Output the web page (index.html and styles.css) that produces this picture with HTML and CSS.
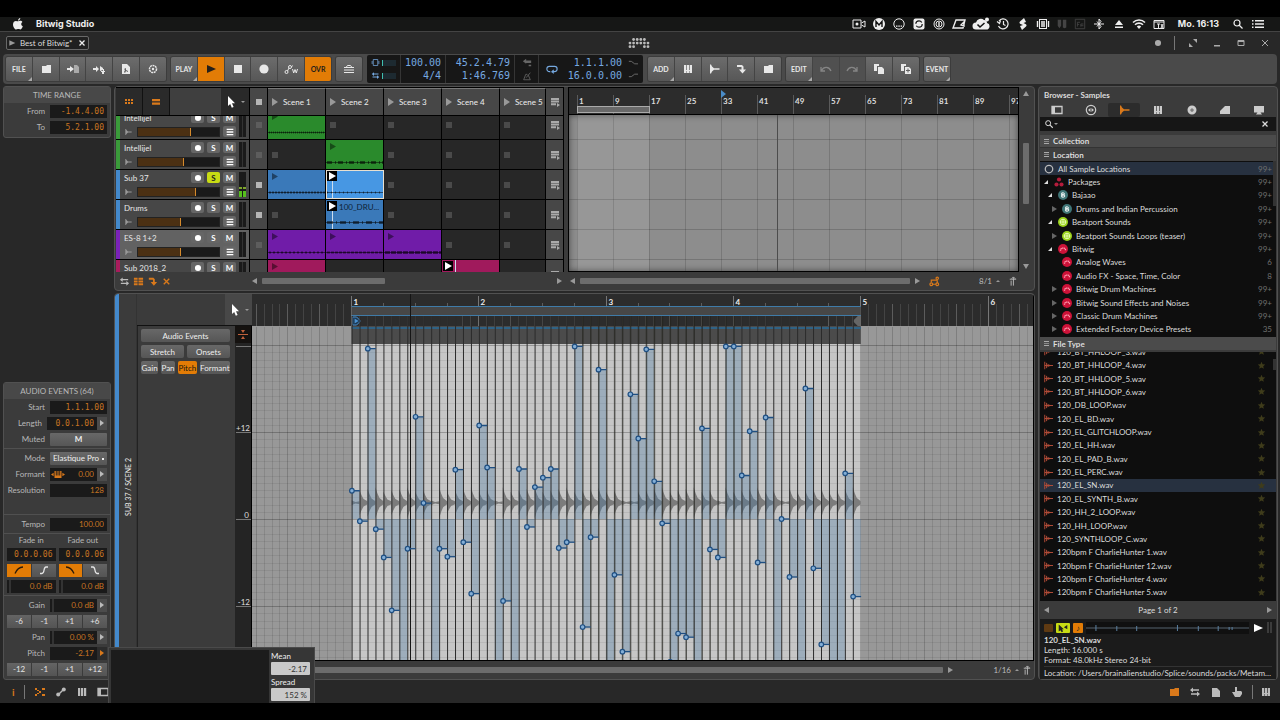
FILE: index.html
```html
<!DOCTYPE html>
<html lang="en">
<head>
<meta charset="utf-8">
<title>Bitwig Studio</title>
<link rel="stylesheet" href="styles.css">
</head>
<body>
<svg class="defs" aria-hidden="true">
  <symbol id="folder" viewBox="0 0 12 12"><path d="M2 3h4l1-1h4v8H2z"/></symbol>
  <symbol id="file-in" viewBox="0 0 12 12"><path d="M0 5h3V3l4 3-4 3V7H0z"/><path d="M7 2h3l2 2v6H7z" opacity=".55"/></symbol>
  <symbol id="file-add" viewBox="0 0 12 12"><path d="M0 5h3V3l3 3-3 3V7H0zM7 3l3 2v2l-3 1zM8 8h2V6h1v2h1v1h-1v2H9V9H8z"/></symbol>
  <symbol id="doc" viewBox="0 0 12 12"><path fill-rule="evenodd" d="M2 1h5l3 3v7H2zM4 6l1 1-1 2 1 1 1-2 2 1V8L6 7V5z"/></symbol>
  <symbol id="gear" viewBox="0 0 12 12"><circle cx="6" cy="6" r="3.500" fill="none" stroke="currentColor" stroke-width="1.500" stroke-dasharray="2 .6"/><circle cx="6" cy="6" r="1.200"/></symbol>
  <symbol id="play" viewBox="0 0 12 12"><path d="M2 2l9 4-9 4z"/></symbol>
  <symbol id="square" viewBox="0 0 12 12"><path d="M2 2h8v8H2z"/></symbol>
  <symbol id="dot" viewBox="0 0 12 12"><circle cx="6" cy="6" r="4.600"/></symbol>
  <symbol id="auto" viewBox="0 0 14 12"><g fill="none" stroke="currentColor"><circle cx="2.500" cy="9" r="1.500"/><circle cx="6" cy="4" r="1.500"/><path d="M3.500 8L5 5M7.500 4l1-1.500M8.500 6l1.200 4 1.300-3.500L12.300 10 13.500 6"/></g></symbol>
  <symbol id="layers" viewBox="0 0 12 12"><path d="M1 9.500h10M1 7h10M1 4.500h10M3 4.500L4.500 2.500h3L9 4.500" fill="none" stroke="currentColor"/></symbol>
  <symbol id="keys" viewBox="0 0 12 12"><path d="M2 2h2v5h.7V2H7v5h.7V2H10v8H7.500V8H7v2H5V8h-.5v2H2z"/></symbol>
  <symbol id="wave" viewBox="0 0 12 12"><path d="M2 1.500h1l1 2 2 1.800h5.500v1.400H6L4 8.500l-1 2H2z"/></symbol>
  <symbol id="hook" viewBox="0 0 12 12"><path d="M2 2h5l1.500 1.500V6.500H11L7.500 10.500 4 6.500h2.500V4H2z"/></symbol>
  <symbol id="undo" viewBox="0 0 12 12"><path d="M1 4v4h4M1.500 7.500C4 3 9 3.500 11 8" fill="none" stroke="currentColor" stroke-width="1.300"/></symbol>
  <symbol id="redo" viewBox="0 0 12 12"><path d="M11 4v4H7M10.500 7.500C8 3 3 3.500 1 8" fill="none" stroke="currentColor" stroke-width="1.300"/></symbol>
  <symbol id="copy" viewBox="0 0 12 12"><path d="M1 1h5v2H4v5H1z"/><path d="M5 4h4l2 2v5H5z"/></symbol>
  <symbol id="dup" viewBox="0 0 12 12"><path d="M1 1h5v2H4v5H1z"/><path fill-rule="evenodd" d="M5 4h4l2 2v5H5zM6 7v1h1.500v1.500h1V8H10V7H8.500V5.500h-1V7z"/></symbol>
  <symbol id="cursor" viewBox="0 0 12 12"><path d="M3 0v10l2.200-2 1.600 3.800 1.800-.8L7 7.300h3z"/></symbol>
  <symbol id="grid6" viewBox="0 0 12 12"><path d="M2 3h2v2H2zM5 3h2v2H5zM8 3h2v2H8zM2 6h2v2H2zM5 6h2v2H5zM8 6h2v2H8z"/></symbol>
  <symbol id="two" viewBox="0 0 12 12"><path d="M2 3h8v2.300H2zM2 6.500h8v2.300H2z"/></symbol>
  <symbol id="lines" viewBox="0 0 12 12"><path d="M1 1h10v2H1zM1 5h10v2H1zM1 9h10v2H1z"/></symbol>
  <symbol id="queue" viewBox="0 0 12 12"><path d="M2 2h8v2H2zM2 4.600h8v2H2zM2 7.200h5v2H2zM8 7l3 2-3 2z"/></symbol>
  <symbol id="cross" viewBox="0 0 12 12"><path d="M3 3l6 6M9 3L3 9" stroke="currentColor" stroke-width="1.500"/></symbol>
  <symbol id="swap" viewBox="0 0 12 12"><path d="M4 1.500v5L1 4zM4 3.300h6v1.400H4zM8 5.500v5L11 8zM2 7.300h6v1.400H2z"/></symbol>
  <symbol id="lanes" viewBox="0 0 12 12"><path d="M1 2h4v2H1zM6 2h5v2H6zM1 5h4v2H1zM6 5h5v2H6zM1 8h4v2H1zM6 8h5v2H6z"/></symbol>
  <symbol id="panel" viewBox="0 0 12 12"><path d="M1 2.500h10v7H1z" fill="none" stroke="currentColor" stroke-width="1.300"/><path d="M1 2h3v8H1z"/></symbol>
  <symbol id="target" viewBox="0 0 12 12"><circle cx="6" cy="6" r="4.700" fill="none" stroke="currentColor" stroke-width="1.200"/><path d="M5.500 4v4L3 6zM6.500 4v4L9 6z"/></symbol>
  <symbol id="disc" viewBox="0 0 12 12"><path fill-rule="evenodd" d="M6 1.500a4.500 4.500 0 1 0 0 9 4.500 4.500 0 1 0 0-9zM6 4.500a1.500 1.500 0 1 1 0 3 1.500 1.500 0 1 1 0-3z"/><circle cx="6" cy="6" r=".8"/></symbol>
  <symbol id="wedge" viewBox="0 0 12 12"><path d="M1 10V7l5-5h5v8z"/></symbol>
  <symbol id="screen" viewBox="0 0 12 12"><path d="M1 2h10v6.500H7.500L9 10.500H3l1.500-2H1z"/></symbol>
  <symbol id="mag" viewBox="0 0 12 12"><circle cx="5" cy="5" r="3" fill="none" stroke="currentColor" stroke-width="1.200"/><path d="M7 7l3.500 3.500" stroke="currentColor" stroke-width="1.300"/></symbol>
  <symbol id="star" viewBox="0 0 12 12"><path d="M6 1l1.400 3.300 3.600.3-2.700 2.300.8 3.500L6 8.500l-3.100 1.900.8-3.500L1 4.600l3.600-.3z"/></symbol>
  <symbol id="sample" viewBox="0 0 12 12"><path d="M1 1v10M3.500 2.500v7M5.500 4v4M7.500 5v2M1 6h11" stroke="currentColor" stroke-width="1.300"/></symbol>
  <symbol id="fade1" viewBox="0 0 12 12"><path d="M2 9.500C4 5 6 3 10 3" fill="none" stroke="currentColor" stroke-width="1.300"/></symbol>
  <symbol id="fade2" viewBox="0 0 12 12"><path d="M2 9.500h2C7 9.500 5 3 8 3h2" fill="none" stroke="currentColor" stroke-width="1.300"/></symbol>
  <symbol id="fade3" viewBox="0 0 12 12"><path d="M2 3c4 0 6 2 8 6.500" fill="none" stroke="currentColor" stroke-width="1.300"/></symbol>
  <symbol id="fade4" viewBox="0 0 12 12"><path d="M2 3h2c3 0 1 6.500 4 6.500h2" fill="none" stroke="currentColor" stroke-width="1.300"/></symbol>
  <symbol id="snap" viewBox="0 0 12 12"><path d="M7 1.500v9M4.500 5v5.500M3 3.500h7M7 1L5 3M7 1l2 2" fill="none" stroke="currentColor"/></symbol>
  <symbol id="page" viewBox="0 0 12 12"><path d="M2 2h5l3 3v6H2z"/></symbol>
  <symbol id="hand" viewBox="0 0 12 12"><path d="M4 1h2v4h4l1 1v2l-2 3H4L1 6h3z"/></symbol>
  <symbol id="nodes" viewBox="0 0 12 12"><path d="M1 2h2v2H1zM1 8h2v2H1zM5 5h2v2H5zM8 2h3v2H8zM8 8h3v2H8zM3 4h2v1H3zM3 7h2v1H3z"/></symbol>
  <symbol id="link" viewBox="0 0 12 12"><path d="M3 9l5-5" stroke="currentColor" stroke-width="1.500"/><circle cx="3.200" cy="8.500" r="2"/><circle cx="8.800" cy="3.500" r="2"/></symbol>
  <symbol id="bars" viewBox="0 0 12 12"><path d="M2 2h2.200v8H2zM5 2h2.200v8H5zM8 2h2.200v8H8z"/></symbol>
  <symbol id="splice" viewBox="0 0 12 12"><path d="M7 0L3 3.500c-1 1-.5 2 .5 2.500L6 7 3 8l2 4 4-3.500c1-1 .5-2-.5-2.500L6.500 5 9 4z"/></symbol>
  <symbol id="person" viewBox="0 0 12 12"><g fill="none" stroke="currentColor" stroke-width="1.300"><circle cx="9" cy="2.500" r="1.300"/><circle cx="2.500" cy="9" r="1.500"/><circle cx="9" cy="9" r="1.500"/><path d="M2.500 7V4.500H9M4 9h3.500M9 4.500v3"/></g></symbol>
</svg>

<header class="menubar">
  <svg class="apple" viewBox="0 0 12 12"><path d="M8.300 0C8.300 1.500 7.300 2.600 6 2.600 6 1.300 7 .2 8.300 0zM6.100 3.300c.6 0 1.200-.6 2.200-.5 1 0 1.700.5 2.100 1.100-1.800 1.100-1.500 3.600.4 4.300C10.200 9.900 9.300 11.500 8.200 11.500c-.8 0-1.100-.4-2-.4s-1.300.4-2 .4C2.700 11.500 1 8.800 1 6.500 1 4 2.500 2.900 3.900 2.900c1 0 1.600.5 2.200.4z"/></svg>
  <strong class="app-name">Bitwig Studio</strong>
  <div class="tray">
    <svg viewBox="0 0 14 12"><path d="M1 2h8v8H1zM9.500 5l3.500-2v6L9.500 7" fill="none" stroke="currentColor"/><circle cx="5" cy="6" r="1.500"/></svg>
    <svg viewBox="0 0 14 12"><circle cx="7" cy="6" r="6"/><path d="M4 9V3.500l3 3.500 3-3.500V9" fill="none" stroke="#111" stroke-width="1.400"/></svg>
    <svg viewBox="0 0 14 12"><circle cx="7" cy="6" r="5.200" fill="none" stroke="currentColor"/><path d="M4 7.500h1.500v1.200H4zM6.300 7.500h1.500v1.200H6.300zM8.600 7.500h1.500v1.200H8.600z"/></svg>
    <svg viewBox="0 0 14 12"><rect x="1.500" y=".5" width="11" height="11" rx="2"/><circle cx="7" cy="6" r="3.200" fill="none" stroke="#111" stroke-width="1.200" stroke-dasharray="8 2"/></svg>
    <svg viewBox="0 0 14 12"><circle cx="7" cy="6" r="5" fill="none" stroke="currentColor"/><circle cx="7" cy="6" r="3" fill="none" stroke="currentColor"/><path d="M6.300 4h1.400v4H6.300z"/></svg>
    <svg viewBox="0 0 14 12"><path d="M4 2h9l-2 8H1zM9 7l3-3v4z" fill="none" stroke="currentColor" stroke-width="1.400"/></svg>
    <svg class="cloud" viewBox="0 0 18 14"><path d="M4 12.500a3.500 3.500 0 0 1 0-7A5 5 0 0 1 12 3a3 3 0 0 1 3 3 3.300 3.300 0 0 1-1 6.500z"/><circle cx="15" cy="2.500" r="2"/><path d="M5.500 7.500l2.500 2.500 4.500-4" fill="none" stroke="#111" stroke-width="1.500"/></svg>
    <svg viewBox="0 0 14 12"><path d="M3 3a5 5 0 1 1-.5 5M1 3.500l2.500 2 1-3M7.500 3v3.500l2 1" fill="none" stroke="currentColor" stroke-width="1.200"/></svg>
    <svg viewBox="0 0 12 12"><use href="#splice"/></svg>
    <svg viewBox="0 0 14 12"><rect x="3.500" y="1.500" width="7" height="9" fill="none" stroke="currentColor"/><path d="M5 4h4M5 6h4M5 8h4M1.500 3v6M12.500 3v6" stroke="currentColor" stroke-width="1.400"/></svg>
    <svg class="dim" viewBox="0 0 14 12"><path d="M2 1h4v7l-2 3-2-3zM8 1h4v9l-2 1-2-1z"/></svg>
    <svg class="dim" viewBox="0 0 14 12"><path d="M1.500.5h11v11h-11zM4 9V4h3M4 6.500h2M8 9V6h3M8 8h3" fill="none" stroke="currentColor"/></svg>
    <svg viewBox="0 0 14 12"><path d="M7 1v10M7 1l2 2.500-4 5M7 11l2-2.500-4-5M2 6h10" fill="none" stroke="currentColor"/></svg>
    <svg viewBox="0 0 14 12"><path d="M7 2l4 5H3zM3 8.500h8V10H3z"/></svg>
    <svg viewBox="0 0 14 12"><path d="M1 4.500a8.500 8.500 0 0 1 12 0M3 6.800a5.600 5.600 0 0 1 8 0" fill="none" stroke="currentColor" stroke-width="1.600"/><path d="M4.800 8.500a3.200 3.200 0 0 1 4.400 0L7 11z"/></svg>
    <svg viewBox="0 0 14 12"><path fill="none" stroke="currentColor" d="M2 2.500h10v8H2zM2 4h10M5 6h3M6.500 6v4M9 6l2 4M11 6L9 10"/></svg>
    <strong class="clock">Mo. 16:13</strong>
    <svg viewBox="0 0 12 12"><use href="#mag"/></svg>
    <svg viewBox="0 0 14 12"><path d="M1 2h1.500v1.500H1zM4 2h9v1.500H4zM1 5.300h1.500v1.500H1zM4 5.300h9v1.500H4zM1 8.600h1.500v1.500H1zM4 8.600h9v1.500H4z"/></svg>
  </div>
</header>

<div class="app">
  <div class="titlebar">
    <div class="tab"><svg viewBox="0 0 12 12"><use href="#play"/></svg><span>Best of Bitwig*</span><button class="bare" aria-label="Close project"><svg viewBox="0 0 12 12"><use href="#cross"/></svg></button></div>
    <svg class="logo" viewBox="0 0 22 12" aria-label="Bitwig"><g id="logo-dots"></g></svg>
    <div class="window-tools">
      <svg viewBox="0 0 12 12"><use href="#dot"/></svg><i class="rule"></i>
      <button class="bare" aria-label="Full screen"><svg viewBox="0 0 12 12"><path d="M6 2h4v4zM2 6v4h4z"/></svg></button>
      <button class="bare" aria-label="Minimize"><svg viewBox="0 0 12 12"><path d="M3 8h6v1.500H3z"/></svg></button>
      <button class="bare" aria-label="Maximize"><svg viewBox="0 0 12 12"><path d="M3 3.500h6v5H3zM3 4.500h6" fill="none" stroke="currentColor"/></svg></button>
      <button class="bare" aria-label="Close"><svg viewBox="0 0 12 12"><path d="M3 3l6 6M9 3L3 9" stroke="currentColor"/></svg></button>
    </div>
  </div>

  <div class="toolbar">
    <div class="group six">
      <button class="tool menu">FILE</button>
      <button class="tool" aria-label="Open"><svg viewBox="0 0 12 12"><use href="#folder"/></svg></button>
      <button class="tool" aria-label="Import"><svg viewBox="0 0 12 12"><use href="#file-in"/></svg></button>
      <button class="tool" aria-label="Import as new"><svg viewBox="0 0 12 12"><use href="#file-add"/></svg></button>
      <button class="tool" aria-label="Export"><svg viewBox="0 0 12 12"><use href="#doc"/></svg></button>
      <button class="tool" aria-label="Settings"><svg viewBox="0 0 12 12"><use href="#gear"/></svg></button>
    </div>
    <div class="group six">
      <button class="tool menu">PLAY</button>
      <button class="tool on" aria-label="Play"><svg viewBox="0 0 12 12"><use href="#play"/></svg></button>
      <button class="tool" aria-label="Stop"><svg viewBox="0 0 12 12"><use href="#square"/></svg></button>
      <button class="tool" aria-label="Record"><svg viewBox="0 0 12 12"><use href="#dot"/></svg></button>
      <button class="tool" aria-label="Automation write"><svg class="auto" viewBox="0 0 14 12"><use href="#auto"/></svg></button>
      <button class="tool on">OVR</button>
    </div>
    <div class="group one"><button class="tool" aria-label="Layers"><svg viewBox="0 0 12 12"><use href="#layers"/></svg></button></div>
    <div class="lcd">
      <div class="lcd-load">
        <div><svg viewBox="0 0 12 12"><path d="M3 2h6v8H3zM1.500 4v4M10.500 4v4" fill="none" stroke="currentColor"/></svg><i></i></div>
        <div><svg viewBox="0 0 12 12"><use href="#swap"/></svg><i></i></div>
      </div>
      <div class="lcd-cell tempo"><span>100.00</span><span>4/4</span></div>
      <div class="lcd-cell pos"><span>45.2.4.79</span><span>1:46.769</span></div>
      <div class="lcd-cell icons"><svg viewBox="0 0 12 12"><path d="M1 4l4-3v2h6v3H5v1zM8 8h3v2H8z"/></svg><svg viewBox="0 0 12 12"><path d="M2 10.500h8L7.500 5M2 10.500L4.500 4h2M5 8l5-6" fill="none" stroke="currentColor"/></svg></div>
      <div class="lcd-cell loop"><svg viewBox="0 0 14 12"><path d="M5 9H4a3 3 0 0 1 0-6h6a3 3 0 0 1 0 6H7l2-2M7 9l2 2" fill="none" stroke="currentColor" stroke-width="1.300"/></svg>
        <div class="loop-values"><span>1.1.1.00</span><span>16.0.0.00</span></div>
        <div class="loop-punch"><svg viewBox="0 0 12 12"><path d="M1 4h3l4 3h4" fill="none" stroke="currentColor"/></svg><svg viewBox="0 0 12 12"><path d="M1 8h3l4-3h4" fill="none" stroke="currentColor"/></svg></div>
      </div>
    </div>
    <div class="group five">
      <button class="tool menu">ADD</button>
      <button class="tool" aria-label="Add instrument"><svg viewBox="0 0 12 12"><use href="#keys"/></svg></button>
      <button class="tool" aria-label="Add audio"><svg viewBox="0 0 12 12"><use href="#wave"/></svg></button>
      <button class="tool" aria-label="Add effect"><svg viewBox="0 0 12 12"><use href="#hook"/></svg></button>
      <button class="tool" aria-label="Add group"><svg viewBox="0 0 12 12"><use href="#folder"/></svg></button>
    </div>
    <div class="group five">
      <button class="tool menu">EDIT</button>
      <button class="tool off" aria-label="Undo"><svg viewBox="0 0 12 12"><use href="#undo"/></svg></button>
      <button class="tool off" aria-label="Redo"><svg viewBox="0 0 12 12"><use href="#redo"/></svg></button>
      <button class="tool" aria-label="Copy"><svg viewBox="0 0 12 12"><use href="#copy"/></svg></button>
      <button class="tool" aria-label="Duplicate"><svg viewBox="0 0 12 12"><use href="#dup"/></svg></button>
    </div>
    <div class="group one"><button class="tool menu">EVENT</button></div>
  </div>

  <main class="workspace">
    <aside class="inspector">
      <section class="box">
        <h2>TIME RANGE</h2>
        <div class="row"><label for="from">From</label><input id="from" class="val mono" value="-1.4.4.00"></div>
        <div class="row"><label for="to">To</label><input id="to" class="val mono" value="5.2.1.00"></div>
      </section>
      <section class="box">
        <h2>AUDIO EVENTS (64)</h2>
        <div class="row"><label for="start">Start</label><input id="start" class="val mono" value="1.1.1.00"></div>
        <div class="row"><label for="length">Length</label><input id="length" class="val mono" value="0.0.1.00"><button class="more" aria-label="Length options"></button></div>
        <div class="row"><label for="muted">Muted</label><button id="muted" class="wide">M</button></div>
        <hr>
        <div class="row"><label for="mode">Mode</label><select id="mode" class="wide"><option>Elastique Pro</option></select></div>
        <div class="row"><label for="formant">Formant</label><div class="with-icon"><svg viewBox="0 0 16 12"><path d="M0 6l3-2v4zM16 6l-3-2v4zM4 2h1.500v5h1V2h1v5h1V2h1v5h1V2H12v8H4z"/></svg><input id="formant" class="val" value="0.00"></div><button class="more" aria-label="Formant options"></button></div>
        <div class="row"><label for="res">Resolution</label><input id="res" class="val" value="128"></div>
        <hr class="spaced">
        <div class="row"><label for="tempo">Tempo</label><input id="tempo" class="val" value="100.00"></div>
        <hr>
        <div class="pair labels"><label for="fin">Fade in</label><label for="fout">Fade out</label></div>
        <div class="pair"><input id="fin" class="val mono" value="0.0.0.06"><input id="fout" class="val mono" value="0.0.0.06"></div>
        <div class="pair"><div class="seg"><button class="on" aria-label="Fade in convex"><svg viewBox="0 0 12 12"><use href="#fade1"/></svg></button><button aria-label="Fade in S"><svg viewBox="0 0 12 12"><use href="#fade2"/></svg></button></div><div class="seg"><button class="on" aria-label="Fade out convex"><svg viewBox="0 0 12 12"><use href="#fade3"/></svg></button><button aria-label="Fade out S"><svg viewBox="0 0 12 12"><use href="#fade4"/></svg></button></div></div>
        <div class="pair"><input class="val knob" aria-label="Fade in level" value="0.0 dB"><input class="val knob" aria-label="Fade out level" value="0.0 dB"></div>
        <hr>
        <div class="row"><label for="gain">Gain</label><input id="gain" class="val knob" value="0.0 dB"><button class="more" aria-label="Gain options"></button></div>
        <div class="seg four"><button>-6</button><button>-1</button><button>+1</button><button>+6</button></div>
        <div class="row"><label for="pan">Pan</label><input id="pan" class="val knob" value="0.00 %"><button class="more" aria-label="Pan options"></button></div>
        <div class="row"><label for="pitch">Pitch</label><input id="pitch" class="val" value="-2.17"><button class="more open" aria-label="Pitch options"></button></div>
        <div class="seg four"><button>-12</button><button>-1</button><button>+1</button><button>+12</button></div>
      </section>
    </aside>

    <div class="center">
      <section class="frame top">
        <div class="launcher">
          <div class="l-row l-head">
            <div class="head-tools"><button class="view" aria-label="Launcher"><svg viewBox="0 0 12 12"><use href="#grid6"/></svg></button><button class="view" aria-label="Arranger"><svg viewBox="0 0 12 12"><use href="#two"/></svg></button><span class="grow"></span><button class="pointer" aria-label="Pointer tool"><svg viewBox="0 0 12 12"><use href="#cursor"/></svg><i class="tiny"></i></button></div>
            <div class="stop"><i class="sq hot"></i></div>
            <button class="scene"><i class="tri"></i>Scene 1</button><button class="scene"><i class="tri"></i>Scene 2</button><button class="scene"><i class="tri"></i>Scene 3</button><button class="scene"><i class="tri"></i>Scene 4</button><button class="scene"><i class="tri"></i>Scene 5</button>
            <div class="stop"><svg viewBox="0 0 12 12"><use href="#queue"/></svg></div>
          </div>
          <div class="tracks"><div id="tracks"></div></div>
        </div>
        <div class="arranger">
          <div class="a-ruler"><div class="a-loop"></div><i class="flag"></i><div class="a-nums"><span>1</span><span>9</span><span>17</span><span>25</span><span>33</span><span>41</span><span>49</span><span>57</span><span>65</span><span>73</span><span>81</span><span>89</span><span>97</span></div></div>
          <div class="a-grid"><i class="a-range"></i><i class="a-head"></i></div>
        </div>
        <div class="v-scroll"><i class="arrow up"></i><i class="thumb"></i><i class="arrow down"></i></div>
        <div class="foot left"><svg viewBox="0 0 12 12"><use href="#swap"/></svg><svg class="hot-icon" viewBox="0 0 12 12"><use href="#lanes"/></svg><svg class="hot-icon" viewBox="0 0 12 12"><use href="#hook"/></svg><svg class="hot-icon" viewBox="0 0 12 12"><use href="#cross"/></svg><span class="grow"></span><div class="h-scroll launcher-scroll"><i class="arrow prev"></i><div class="rail"><i class="thumb"></i></div><i class="arrow next"></i></div></div>
        <div class="foot right"><div class="h-scroll"><i class="arrow prev"></i><div class="rail"><i class="thumb full"></i></div><i class="arrow next"></i></div><svg class="orange" viewBox="0 0 12 12"><use href="#person"/></svg><button class="bare zoom">8/1<i class="tiny up"></i></button><svg viewBox="0 0 12 12"><use href="#snap"/></svg></div>
      </section>

      <section class="frame editor">
        <i class="strip"></i>
        <div class="side-label"><span>SUB 37 / SCENE 2</span></div>
        <div class="ed-body">
          <div class="ed-head"><button class="pointer" aria-label="Editor pointer tool"><svg viewBox="0 0 12 12"><use href="#cursor"/></svg><i class="tiny"></i></button></div>
          <div class="lane-buttons">
            <button class="wide full">Audio Events</button>
            <div class="lane-row"><button class="wide">Stretch</button><button class="wide">Onsets</button></div>
            <div class="lane-row fit"><button class="wide">Gain</button><button class="wide">Pan</button><button class="wide on">Pitch</button><button class="wide">Formant</button></div>
          </div>
          <svg class="scale" aria-label="Pitch scale"><path d="M0 0h17v17H0z" fill="#151210"/><path d="M3 8.500h10" stroke="#c0613c"/><path d="M8 7L6 4h4zM8 10l-2 3h4z" fill="#c0613c"/><path d="M1 20.500h15M1 106.500h15M1 193.500h15M1 280.500h15" stroke="#777"/><text x="15" y="105">+12</text><text x="14" y="192">0</text><text x="15" y="279">-12</text></svg>
          <svg class="chart" id="chart" aria-label="Pitch of audio events"></svg>
        </div>
        <div class="foot ed-foot"><div class="h-scroll"><div class="rail"><i class="thumb full"></i></div><i class="arrow next"></i></div><button class="bare zoom">1/16<i class="tiny up"></i></button><svg viewBox="0 0 12 12"><use href="#snap"/></svg></div>
      </section>
    </div>

    <aside class="browser">
      <h1>Browser - Samples</h1>
      <nav class="b-tabs">
        <button aria-label="Everything"><svg viewBox="0 0 12 12"><use href="#panel"/></svg></button><button aria-label="Devices"><svg viewBox="0 0 12 12"><use href="#target"/></svg></button><button class="on" aria-label="Samples"><svg viewBox="0 0 12 12"><use href="#wave"/></svg></button><button aria-label="Presets"><svg viewBox="0 0 12 12"><use href="#keys"/></svg></button><button aria-label="Multisamples"><svg viewBox="0 0 12 12"><use href="#disc"/></svg></button><button aria-label="Clips"><svg viewBox="0 0 12 12"><use href="#wedge"/></svg></button><button aria-label="Files"><svg viewBox="0 0 12 12"><use href="#screen"/></svg></button>
      </nav>
      <div class="search"><svg viewBox="0 0 12 12"><use href="#mag"/></svg><i class="tiny"></i><input type="text" aria-label="Search samples"><button class="bare" aria-label="Clear search"><svg viewBox="0 0 12 12"><use href="#cross"/></svg></button></div>
      <h2 class="b-head first"><i class="eq"></i>Collection</h2>
      <h2 class="b-head flat"><i class="eq"></i>Location</h2>
      <div class="b-list locations"><ul id="locations"></ul><i class="b-thumb"></i></div>
      <h2 class="b-head"><i class="eq"></i>File Type</h2>
      <div class="b-list files"><ul id="files"></ul><i class="b-thumb"></i></div>
      <div class="pager"><button class="bare" aria-label="Previous page"><i class="arrow prev"></i></button><span>Page 1 of 2</span><button class="bare" aria-label="Next page"><i class="arrow next"></i></button></div>
      <div class="preview">
        <div class="p-bar"><i class="p-chip brown"></i><i class="p-chip yellow"><svg viewBox="0 0 14 12"><path d="M2 2v8l2-1.500L5.500 11 7 10 6 7.500h2zM8 5l4-2.500v5z"/></svg></i><i class="p-chip note">♪</i><svg class="p-wave" viewBox="0 0 164 12" preserveAspectRatio="none"><path d="M0 6h164" stroke="#55636f"/><path d="M10 3v6M31 4v5M51 4v5M92 3v6M113 4v5M133 4v5M144 5v3M147 5v3" stroke="#5a7fa0"/></svg><button class="bare" aria-label="Play preview"><svg viewBox="0 0 12 12"><use href="#play"/></svg></button><i class="p-vu"></i></div>
        <p><b>120_EL_SN.wav</b></p><p>Length: 16.000 s</p><p>Format: 48.0kHz Stereo 24-bit</p>
        <p class="path">Location: /Users/brainalienstudio/Splice/sounds/packs/Metamorphi...</p>
      </div>
    </aside>
  </main>

  <footer class="status">
    <b class="info">i</b><i class="rule"></i>
    <svg class="orange" viewBox="0 0 12 12"><use href="#nodes"/></svg><svg viewBox="0 0 12 12"><use href="#link"/></svg><svg viewBox="0 0 12 12"><use href="#bars"/></svg><svg viewBox="0 0 12 12"><use href="#panel"/></svg>
    <span class="grow"></span>
    <svg class="orange" viewBox="0 0 12 12"><use href="#folder"/></svg><svg viewBox="0 0 12 12"><use href="#swap"/></svg><svg viewBox="0 0 12 12"><use href="#page"/></svg><svg viewBox="0 0 12 12"><use href="#hand"/></svg><span class="last"><i class="rule"></i><svg viewBox="0 0 12 12"><use href="#keys"/></svg></span>
  </footer>

  <div class="popup">
    <div class="graph"></div>
    <div class="fields"><label for="mean">Mean</label><input id="mean" value="-2.17"><label for="spread">Spread</label><input id="spread" value="152 %"></div>
  </div>
</div>
<script src="app.js"></script>
</body>
</html>
```
FILE: styles.css
```css
* { box-sizing: border-box; }
html, body { height: 100%; margin: 0; }
body {
  display: flex; flex-direction: column; padding: 17px 0;
  background: #000; color: #dcdcdc; overflow: hidden;
  font-family: Lato, "Open Sans", sans-serif; font-size: 8px; line-height: 12px;
}
svg { width: 12px; height: 12px; fill: currentColor; flex: none; }
button, input, select { font: inherit; color: inherit; margin: 0; padding: 0; border: 0; border-radius: 0; min-width: 0; }
button { display: flex; align-items: center; justify-content: center; background: none; }
i { font-style: normal; }
h1, h2, p, ul { margin: 0; padding: 0; font-size: inherit; font-weight: normal; list-style: none; }
.defs { position: absolute; width: 0; height: 0; }
.grow { flex: 1; }
.orange, .hot-icon { color: #d9791b; }
.rule { width: 1px; height: 14px; background: #777; }

.menubar { display: flex; align-items: center; height: 14px; flex: none; padding: 0 15px 0 12px; background: #161716; color: #eee; font-family: Inter, Roboto, sans-serif; }
.app-name { margin-left: 12px; font-size: 9px; }
.tray { display: flex; align-items: center; gap: 6px; margin-left: auto; }
.tray svg { width: 14px; }
.tray .cloud { width: 18px; height: 14px; }
.tray .dim { width: 12px; color: #444; }
.clock { margin: 0 6px; font-size: 9px; }

.app { position: relative; display: flex; flex-direction: column; flex: 1; min-height: 0; background: #282828; border-top: 1px solid #444; }
.titlebar { display: grid; grid-template-columns: 1fr auto 1fr; align-items: center; flex: none; height: 22px; padding: 0 9px 0 6px; }
.tab { display: flex; align-items: center; justify-self: start; gap: 4px; height: 14px; padding: 0 1px; border: 1px solid #686868; border-radius: 2px; background: #202020; }
.tab svg { width: 8px; height: 8px; color: #999; }
.tab button svg { width: 10px; height: 10px; color: #eee; }
.logo { width: 22px; height: 12px; color: #bbb; }
.window-tools { display: flex; align-items: center; justify-self: end; gap: 12px; color: #aaa; }
.window-tools > svg { width: 8px; height: 8px; }

.toolbar { display: flex; align-items: center; gap: 5px; flex: none; height: 30px; margin: 0 3px; padding: 0 3px; background: #4a4a4a; border-radius: 4px; }
.group { display: flex; border-radius: 2px; overflow: hidden; box-shadow: 0 0 0 1px #3c3c3c; }
.six { width: 160px; }
.five { width: 133px; }
.one { width: 26px; }
.tool { position: relative; flex: 1; height: 24px; background: linear-gradient(#6c6c6c, #575757); color: #e8e8e8; border-right: 1px solid #444; font-size: 7px; font-weight: bold; }
.tool:last-child { border-right: 0; }
.tool .auto { width: 14px; }
.tool.menu::after { content: ""; position: absolute; right: 0; bottom: 0; border: 2px solid #aaa; border-left-color: transparent; border-top-color: transparent; }
.tool.on { background: #e27c06; color: #26201a; }
.tool.off { background: #505050; color: #858585; }
.lcd { display: flex; height: 28px; background: #171717; border-radius: 2px; color: #76a9e0; font-family: "DejaVu Sans Mono", monospace; font-size: 10px; line-height: 13px; }
.lcd > div { border-right: 1px solid #353535; }
.lcd > div:last-child { border-right: 0; }
.lcd span { display: block; text-align: right; }
.lcd-load { width: 34px; padding: 1px 4px; }
.lcd-load div { display: flex; align-items: center; height: 13px; gap: 2px; }
.lcd-load svg { width: 9px; height: 9px; }
.lcd-load i { width: 14px; height: 6px; background: #1d2a31; border-left: 1px solid #3fc0b0; }
.lcd-cell { padding: 1px 4px; }
.tempo { width: 45px; }
.pos { width: 69px; }
.icons { display: flex; flex-direction: column; justify-content: space-around; align-items: center; width: 24px; color: #666; }
.icons svg { width: 10px; height: 10px; }
.loop { display: flex; align-items: center; justify-content: space-between; width: 104px; padding: 1px 5px 1px 7px; }
.loop-values { margin-left: auto; margin-right: 6px; }
.loop-punch { color: #777; height: 24px; }
.loop-punch svg { display: block; width: 10px; }

.workspace { display: flex; flex: 1; min-height: 0; padding: 2px 3px 0; gap: 3px; }
.inspector { display: flex; flex-direction: column; justify-content: space-between; width: 108px; flex: none; }
.box { padding: 0 3px 2px; background: #3b3b3b; border: 1px solid #515151; border-radius: 3px; color: #b8b8b8; }
.box h2 { margin: 0 -3px; height: 16px; line-height: 16px; text-align: center; background: #484848; }
.box hr { height: 1px; margin: 1px -3px; border: 0; background: #505050; }
.box hr.spaced { margin-top: 16px; }
.row { display: flex; align-items: center; height: 16px; }
.row label { flex: 1; padding-right: 5px; text-align: right; }
.val { width: 57px; height: 13px; padding: 0 3px; background: #1a1a1a; color: #c87522; text-align: right; }
.row:has(.more) .val { width: 47px; }
.mono { font-family: "DejaVu Sans Mono", monospace; }
.row:has(.more) .mono { width: 50px; }
.knob { box-shadow: inset 2px 0 #1a1a1a, inset 4px 0 #333; }
.more { width: 10px; height: 13px; background: #4c4c4c; }
.more::before { content: ""; border: 3px solid transparent; border-left: 4px solid #bbb; border-right: 0; }
.more.open { background: #2c2c2c; }
.more.open::before { border-left-color: #d9791b; }
.with-icon { position: relative; display: flex; }
.with-icon svg { position: absolute; left: 1px; top: 1px; width: 14px; height: 11px; color: #d9791b; }
.wide { width: 57px; height: 13px; background: linear-gradient(#686868, #565656); color: #eee; border-radius: 1px; }
#muted { font-weight: bold; }
select.wide { appearance: none; padding-left: 3px; background: linear-gradient(#eee, #eee) 52px 6px / 2px 2px no-repeat, linear-gradient(#686868, #565656); }
.pair { display: grid; grid-template-columns: 1fr 1fr; gap: 3px; height: 16px; align-items: center; }
.pair.labels { height: 11px; text-align: center; line-height: 11px; }
.pair .val { width: 100%; }
.seg { display: grid; grid-template-columns: 1fr 1fr; gap: 1px; }
.seg button { height: 13px; background: linear-gradient(#646464, #545454); color: #e4e4e4; }
.seg button.on { background: #e27c06; color: #2a1b0a; }
.seg.four { grid-template-columns: repeat(4, 1fr); height: 16px; align-items: center; }

.center { display: flex; flex-direction: column; flex: 1; min-width: 0; gap: 2px; }
.frame { background: #3b3b3b; border: 1px solid #515151; border-radius: 4px; min-width: 0; }
.top { display: grid; grid-template-columns: 448px 1fr 14px; grid-template-rows: 185px 18px; column-gap: 4px; padding: 0 1px; flex: none; }
.launcher { background: #000; overflow: hidden; border-top: 1px solid #000; }
.l-row { display: grid; grid-template-columns: 134px 18px repeat(4, 58px) 46px 18px; height: 30px; border-bottom: 1px solid #000; }
.l-row > * { border-right: 1px solid #000; overflow: hidden; }
.l-head { height: 28px; }
.head-tools { display: flex; background: #3f3f3f; }
.view { width: 27px; background: #2a2a2a; border-right: 1px solid #111; color: #d9791b; }
.pointer { width: 28px; gap: 4px; background: #292929; color: #fff; }
.tiny { border: 2px solid transparent; border-top-color: #999; border-bottom: 0; }
.tiny.up { border-top: 0; border-bottom: 2px solid #999; margin-left: 4px; }
.stop { display: flex; align-items: center; justify-content: center; background: #474747; color: #aaa; }
.sq { width: 6px; height: 6px; background: #5d5d5d; }
.sq.hot { background: #b5b5b5; }
.scene { justify-content: flex-start; gap: 5px; padding-left: 4px; background: #474747; color: #eee; border-top: 1px solid #777; white-space: nowrap; }
.tri { border: 4px solid transparent; border-left: 6px solid #999; border-right: 0; flex: none; }
.tracks { height: 156px; overflow: hidden; }
#tracks { margin-top: -6px; }
.track { display: grid; grid-template-columns: 1fr 13px 13px 13px 8px; grid-template-rows: 15px 13px; column-gap: 3px; align-items: center; padding-right: 2px; background: #474747; border-left: 4px solid; }
.track.sel { background: #626262; }
.track .name { padding-left: 4px; color: #e6e6e6; white-space: nowrap; }
.chip { height: 11px; background: #666; border-radius: 2px; color: #fff; font-weight: bold; }
.chip svg { width: 8px; height: 8px; }
.chip.solo { background: #c8dc14; color: #222; }
.meter { grid-column: 5; grid-row: 1 / 3; width: 7px; height: 25px; background: linear-gradient(90deg, transparent 3px, #333 3px 4px, transparent 4px), #1a1a1a; }
.meter.live { background: linear-gradient(90deg, transparent 3px, #1a1a1a 3px 4px, transparent 4px), linear-gradient(#1a1a1a 15px, #7da52a 15px 17px, #1a1a1a 17px 19px, #57c01e 19px); }
.fader-row { grid-column: 1 / 4; display: flex; align-items: center; gap: 5px; padding-left: 4px; color: #999; }
.fader-row svg { width: 8px; height: 8px; }
.fader { flex: 1; height: 10px; background: #1a1a1a; border: 1px solid #222; }
.fader i { display: block; height: 8px; background: #4b3013; border-right: 1px solid #d58a2c; }
.slot { position: relative; display: flex; align-items: center; padding-left: 4px; background: #272727; }
.slot .sq { background: #4a4a4a; }
.clip { position: relative; width: 100%; background: var(--c); }
.clip svg { display: block; width: 100%; height: 29px; color: #000; }
.clip.chosen { outline: 1px solid #e9e0d0; outline-offset: -1px; }
.clip span { position: absolute; left: 13px; top: 1px; color: #0e2236; }

.arranger { background: #000; overflow: hidden; border: 1px solid #000; min-width: 0; margin-right: -4px; }
.a-ruler { position: relative; height: 27px; overflow: hidden; background: linear-gradient(90deg, #5a5a5a 1px, transparent 1px) 8px 7px / 36px 20px repeat-x, #2c2c2c; border-bottom: 1px solid #000; }
.a-nums { display: flex; padding: 7px 0 0 10px; line-height: 12px; font-weight: bold; }
.a-nums span { width: 36px; flex: none; }
.a-loop { position: absolute; left: 8px; top: 18px; width: 73px; height: 7px; background: #696969; border: 1px solid #aaa; }
.flag { position: absolute; left: 152px; top: 2px; border: 4px solid transparent; border-left: 5px solid #4a8cc8; border-right: 0; }
.a-grid { position: relative; height: 156px; background: linear-gradient(rgba(0,0,0,.17) 1px, transparent 1px) 0 24px / 100% 30px, linear-gradient(90deg, rgba(0,0,0,.15) 1px, transparent 1px) 8px 0 / 36px 100%, #8d8d8d; box-shadow: inset 0 0 6px #444; }
.a-range { position: absolute; left: 8px; top: 0; bottom: 0; width: 72px; background: rgba(255,255,255,.09); }
.a-head { position: absolute; left: 208px; top: 0; bottom: 0; width: 1px; background: #4c4c4c; }
.arrow { border: 3px solid transparent; flex: none; }
.arrow.prev { border-right: 5px solid #999; border-left: 0; }
.arrow.next { border-left: 5px solid #999; border-right: 0; }
.arrow.up { border-bottom: 5px solid #999; border-top: 0; }
.arrow.down { border-top: 5px solid #999; border-bottom: 0; }
.v-scroll { display: flex; flex-direction: column; align-items: center; justify-content: space-between; padding: 4px 0 3px; }
.v-scroll .thumb { width: 6px; height: 61px; margin-bottom: 14px; background: #6c6c6c; border-radius: 1px; }
.foot { display: flex; align-items: center; gap: 1px; color: #bbb; }
.foot svg { width: 11px; height: 11px; margin: 0 1px; }
.foot.left { padding-left: 2px; }
.foot.right { grid-column: 2 / 4; gap: 6px; padding-right: 14px; }
.h-scroll { display: flex; align-items: center; flex: 1; gap: 5px; padding: 0 2px; }
.launcher-scroll { flex: none; width: 314px; }
.rail { flex: 1; }
.h-scroll .thumb { display: block; width: 123px; height: 6px; background: #6c6c6c; border-radius: 1px; }
.h-scroll .thumb.full { width: 100%; }
.zoom { margin-left: auto; }
.foot.right .zoom { margin-left: 32px; }

.editor { display: grid; grid-template-columns: 4px 18px 1fr; grid-template-rows: 1fr 18px; flex: 1; min-height: 0; overflow: hidden; }
.strip { grid-row: 1 / 3; background: #4389cc; border-radius: 3px 0 0 0; }
.side-label { display: flex; align-items: center; justify-content: center; grid-row: 1 / 3; border-right: 1px solid #333; }
.side-label span { writing-mode: vertical-rl; transform: rotate(180deg); color: #eee; font-size: 7px; }
.ed-body { display: grid; grid-template-columns: 98px 17px 1fr; grid-template-rows: 32px 1fr; min-width: 0; min-height: 0; }
.ed-head { grid-column: 1 / 3; display: flex; justify-content: flex-end; border-bottom: 1px solid #111; }
.ed-head .pointer { background: #484848; width: 27px; }
.lane-buttons { display: flex; flex-direction: column; gap: 3px; padding: 3px 5px 3px 3px; border-left: 1px solid #222; }
.lane-buttons .wide { flex: 1 1 0; width: auto; border-radius: 2px; }
.lane-buttons .full { flex: none; }
.lane-row { display: flex; gap: 3px; }
.lane-buttons .fit .wide { flex: 1 1 auto; }
.lane-buttons .on { background: #e27c06; color: #20160c; }
.scale { width: 100%; height: 100%; background: #242424; border-right: 1px solid #000; }
.scale text { fill: #ddd; font-size: 8px; text-anchor: end; }
.chart { display: block; grid-column: 3; grid-row: 1 / 3; width: 100%; height: 100%; background: #989898; border: solid #000; border-width: 0 1px 1px 0; overflow: hidden; }
.chart text { fill: #eee; font-size: 8px; font-weight: bold; }
.ed-foot { grid-column: 3; padding-right: 1px; }
.ed-foot .h-scroll { flex: none; width: calc(100% - 78px); padding-left: 50px; }

.browser { display: flex; flex-direction: column; width: 240px; flex: none; margin-right: -1px; padding: 1px 1px 0; background: #3b3b3b; border: 1px solid #515151; border-radius: 4px; }
.browser h1 { height: 15px; padding-left: 4px; line-height: 15px; font-weight: bold; }
.b-tabs { display: grid; grid-template-columns: repeat(7, 1fr); height: 14px; color: #ccc; }
.b-tabs button { border-radius: 2px; margin: 0 1px; }
.b-tabs .on { background: #2c2c2c; color: #d9791b; }
.search { display: flex; align-items: center; height: 14px; padding: 0 6px 0 4px; background: #161616; }
.search input { flex: 1; background: none; outline: 0; }
.search svg { width: 10px; height: 10px; }
.b-head { display: flex; align-items: center; gap: 4px; height: 13px; flex: none; padding-left: 4px; background: #4b4b4b; font-weight: bold; }
.b-head.first { margin-top: 4px; border-bottom: 1px solid #333; }
.b-head.flat { background: #3f3f3f; }
.eq { width: 5px; height: 5px; border: solid #aaa; border-width: 1px 0; box-shadow: inset 0 1px #4b4b4b, inset 0 2px #888; }
.b-list { position: relative; overflow: hidden; background: #0e0e0e; min-height: 0; }
.b-list ul { display: grid; grid-auto-rows: 1fr; height: 100%; }
.locations { flex: 175 1 0; padding: 1px 0; }
.files { flex: 250 1 0; margin-top: 2px; }
.files ul { height: calc(100% + 5px); margin-top: -7px; }
.b-list li { display: flex; align-items: center; gap: 4px; min-height: 0; padding: 0 12px 0 4px; white-space: nowrap; line-height: 12px; }
.b-list li.sel { background: #273140; }
.b-list .count { margin-left: auto; margin-right: -8px; color: #707070; }
.b-list li > svg { width: 10px; height: 10px; }
.b-list .star { width: 9px; height: 9px; margin-left: auto; margin-right: -2px; color: #3f3c1b; }
.b-list .wav { width: 9px; height: 9px; color: #b34c38; }
.locations li.d1 { padding-left: 8px; }
.locations li.d2 { padding-left: 12px; }
.locations li.leaf { padding-left: 22px; }
.fold { border: 3px solid transparent; border-left: 5px solid #666; border-right: 0; margin-right: 1px; }
.fold.open { border: 2px solid #ddd; border-left-color: transparent; border-top-color: transparent; margin-right: 2px; }
.b-thumb { position: absolute; right: 0; top: 0; width: 3px; height: 45px; background: #333; }
.files .b-thumb { top: 7px; height: 11px; }
.pager { display: flex; align-items: center; justify-content: space-between; flex: none; height: 18px; padding: 0 4px; }
.preview { flex: none; height: 60px; padding: 2px 4px; background: #1b1b1b; line-height: 10px; }
.p-bar { display: flex; align-items: center; gap: 3px; height: 13px; margin-bottom: 1px; }
.p-chip { display: flex; align-items: center; justify-content: center; width: 10px; height: 10px; border-radius: 1px; background: #e27c06; color: #222; }
.p-chip.brown { width: 9px; height: 8px; background: #5f3a12; }
.p-chip.yellow { width: 14px; background: #c8dc14; }
.p-wave { flex: 1; min-width: 0; background: #101010; }
.p-bar .bare { color: #fff; }
.p-vu { width: 5px; height: 11px; background: linear-gradient(90deg, #3c3c3c 2px, transparent 2px 3px, #3c3c3c 3px); }
.path { margin-top: 1px; padding-top: 1px; border-top: 1px solid #333; overflow: hidden; white-space: nowrap; text-overflow: ellipsis; }

.status { display: flex; align-items: center; gap: 9px; flex: none; height: 23px; padding: 0 8px 0 12px; color: #bbb; }
.status .info { color: #d9791b; font-size: 10px; }
.last { display: flex; align-items: center; gap: 7px; }
.popup { position: absolute; left: 108px; bottom: 0; display: flex; width: 207px; height: 56px; padding: 2px 4px 0 2px; background: #363636; border: 1px solid #4a4a4a; border-bottom: 0; z-index: 2; }
.graph { flex: 1; background: #1c1c1c; }
.fields { display: flex; flex-direction: column; width: 41px; padding-left: 2px; color: #eee; }
.fields input { height: 13px; margin-bottom: 1px; padding-right: 3px; background: #c9c9c9; color: #333; text-align: right; border-radius: 1px; }
```
FILE: app.js
```js
const icon = (id, cls = "") => `<svg class="${cls}" viewBox="0 0 12 12"><use href="#${id}"/></svg>`;

/* Launcher tracks: clips map a slot to [colour, dash pattern, options] */
const tracks = [
  { name: "Intellijel", color: "#3a9a3a", level: 65, clips: { 0: ["#2a8a2c", "1 1"] } },
  { name: "Intellijel", color: "#3a9a3a", level: 57, clips: { 1: ["#2a8a2c", "5 3 1 2"] } },
  { name: "Sub 37", color: "#4389cc", level: 72, solo: true, live: true, hot: true, clips: { 0: ["#3a79b9", "2 1"], 1: ["#4797e3", "1 3", { playing: true, chosen: true }] } },
  { name: "Drums", color: "#4389cc", level: 53, hot: true, clips: { 1: ["#3a79b9", "6 3 1 3", { playing: true, label: "100_DRU..." }] } },
  { name: "ES-8 1+2", color: "#7a22b8", level: 53, selected: true, clips: { 0: ["#701ca8", "2 2"], 1: ["#701ca8", "3 1"], 2: ["#701ca8", "5 1"] } },
  { name: "Sub 2018_2", color: "#a81c5c", level: 53, clips: { 0: ["#a01a5c", ""], 3: ["#a01a5c", "", { playing: true }] } }
];
const clipHtml = ([color, dash, opt = {}]) => `<div class="clip${opt.chosen ? " chosen" : ""}" style="--c:${color}"><svg>
  ${opt.playing ? `<path d="M1 1h10v10H1z"/><path d="M3 2l7 4-7 4z" fill="#fff"/><path d="${dash ? "M6.500 11v18" : "M13.500 0v29"}" stroke="#cde"/>` : '<path d="M4 3l6 3.500L4 10z" opacity=".45"/>'}
  ${dash ? `<path d="M0 22.500h58" stroke="#000" stroke-opacity=".5"/><path d="M1 22.500h56" stroke="#000" stroke-width="${dash.length > 3 || dash[0] === "5" ? 3 : 2}" stroke-opacity=".5" stroke-dasharray="${dash}"/>` : ""}
  </svg>${opt.label ? `<span>${opt.label}</span>` : ""}</div>`;
document.getElementById("tracks").innerHTML = tracks.map(t => `<div class="l-row">
  <div class="track${t.selected ? " sel" : ""}" style="border-left-color:${t.color}">
    <span class="name">${t.name}</span><button class="chip" aria-label="Record arm">${icon("dot")}</button><button class="chip${t.solo ? " solo" : ""}">S</button><button class="chip">M</button>
    <i class="meter${t.live ? " live" : ""}"></i>
    <div class="fader-row">${icon("wave")}<div class="fader"><i style="width:${t.level}%"></i></div></div><button class="chip" aria-label="Track menu">${icon("lines")}</button>
  </div>
  <div class="stop"><i class="sq${t.hot ? " hot" : ""}"></i></div>
  ${[0, 1, 2, 3, 4].map(n => t.clips[n] ? clipHtml(t.clips[n]) : '<div class="slot"><i class="sq"></i></div>').join("")}
  <div class="stop">${icon("queue")}</div></div>`).join("");

/* Browser locations: [indent class, fold, badge, name, count] */
const badge = {
  all: '<circle cx="6" cy="6" r="4.500" fill="none" stroke="#bbb" stroke-width="1.500"/>',
  packs: '<g fill="#b51c3c"><circle cx="6" cy="3" r="2.500"/><circle cx="3" cy="9" r="2.500"/><circle cx="9" cy="9" r="2.500"/></g>',
  bajaao: '<circle cx="6" cy="6" r="6" fill="#3f7476"/><path d="M4.500 3.500h2a1.200 1.200 0 0 1 0 2.400h-2zm0 2.400h2.300a1.300 1.300 0 0 1 0 2.600H4.500z" fill="none" stroke="#fff" stroke-width="1.200"/>',
  beat: '<circle cx="6" cy="6" r="6" fill="#9ad21c"/><circle cx="6" cy="6" r="3.300" fill="none" stroke="#efffc8"/><path d="M2 6h8M6 3v6" stroke="#efffc8"/>',
  bitwig: '<circle cx="6" cy="6" r="6" fill="#cc1238"/><path d="M3 8V6.500L4.500 5h3L9 6.500V8" fill="none" stroke="#ff9db0" stroke-width="1.600" stroke-dasharray="1.500 .5"/>'
};
const locations = [
  ["sel", "", "all", "All Sample Locations", "99+"], ["d0", "open", "packs", "Packages", "99+"],
  ["d1", "open", "bajaao", "Bajaao", "99+"], ["d2", "shut", "bajaao", "Drums and Indian Percussion", "99+"],
  ["d1", "open", "beat", "Beatport Sounds", "99+"], ["d2", "shut", "beat", "Beatport Sounds Loops (teaser)", "99+"],
  ["d1", "open", "bitwig", "Bitwig", "99+"], ["leaf", "", "bitwig", "Analog Waves", "6"],
  ["leaf", "", "bitwig", "Audio FX - Space, Time, Color", "8"], ["d2", "shut", "bitwig", "Bitwig Drum Machines", "99+"],
  ["d2", "shut", "bitwig", "Bitwig Sound Effects and Noises", "99+"], ["d2", "shut", "bitwig", "Classic Drum Machines", "99+"],
  ["d2", "shut", "bitwig", "Extended Factory Device Presets", "35"]
];
document.getElementById("locations").innerHTML = locations.map(([cls, fold, b, name, count]) =>
  `<li class="${cls}">${fold ? `<i class="fold ${fold}"></i>` : ""}<svg viewBox="0 0 12 12">${badge[b]}</svg><span>${name}</span><span class="count">${count}</span></li>`).join("");

const files = ["BT_HHLOOP_3", "BT_HHLOOP_4", "BT_HHLOOP_5", "BT_HHLOOP_6", "DB_LOOP", "EL_BD", "EL_GLITCHLOOP", "EL_HH", "EL_PAD_B", "EL_PERC", "EL_SN", "EL_SYNTH_B", "HH_2_LOOP", "HH_LOOP", "SYNTHLOOP_C"].map(n => `120_${n}.wav`)
  .concat([1, 12, 4, 5].map(n => `120bpm F CharlieHunter ${n}.wav`));
document.getElementById("files").innerHTML = files.map(f =>
  `<li class="${f === "120_EL_SN.wav" ? "sel" : ""}">${icon("sample", "wav")}<span>${f}</span>${icon("star", "star")}</li>`).join("");

/* Logo made of dots */
const dotRows = [" #### ", "######", "##  ##"];
document.getElementById("logo-dots").innerHTML = dotRows.map((r, y) => [...r].map((c, x) => c === "#" ? `<circle cx="${2 + x * 3.600}" cy="${2.500 + y * 3.600}" r="1.400"/>` : "").join("")).join("");

/* Pitch of each of the 64 audio events, in semitones */
const pitches = [3.9, -.3, 23.5, -1.4, -5.3, -12.6, -24, -4.1, 14.1, 2.2, -24, -4.1, -5.2, 6.8, -3.2, -10.3,
  12.9, 7.1, -24, -11.3, -24, 6.9, -1.1, 4.4, 5.7, 6.9, -4, -3.2, 23.8, -14.9, -2.5, 20.6,
  -24, -7.7, -18.3, 17.2, 11.1, 23.4, 5.2, -.6, -19.7, -15.8, -16.3, -24, 12.5, -4.2, -5.3, 23.8,
  23.8, 6, 12.1, -6, 14, -24, 0, -8, -24, 18, -6.8, -17.3, -24, -24, 6.3, -10.7];
const left = 99.600, step = 7.956, zero = 225, semi = 7.25, right = left + 64 * step, far = 3000, bottom = 1200;
const rect = (x, y, w, h, fill) => `<rect x="${x}" y="${y}" width="${w}" height="${h}" fill="${fill}"/>`;
const line = (x1, y1, x2, y2, stroke, w = 1) => `<line x1="${x1}" y1="${y1}" x2="${x2}" y2="${y2}" stroke="${stroke}" stroke-width="${w}"/>`;
let out = rect(0, 0, far, 32, "#2c2c2c");
out += rect(left, 50, right - left, bottom, "#c6c6c6");
for (let n = 24; n > -60; n--) {
  const y = Math.round(zero - n * semi) + .5;
  out += line(0, y, far, y, `rgba(0,0,0,${n % 12 === 0 ? .24 : .07})`);
}
for (let i = -12; left + i * step < far; i++) {
  const x = Math.floor(left + i * step) + .5, inClip = i >= 0 && i < 64, bar = i % 16 === 0, beat = i % 4 === 0;
  out += line(x, inClip ? (beat ? 9 : 22) : 10, x, 32, beat ? "#5c5c5c" : "#444");
  if (!inClip) out += line(x, 33, x, bottom, `rgba(0,0,0,${beat ? .17 : .1})`);
  if (i >= 0 && bar) out += line(x, 2, x, 32, "#777") + `<text x="${x + 2}" y="11">${i / 16 + 1}</text>`;
}
out += rect(left, 12, right - left, 9, "#474747") + line(left, 12.500, right, 12.500, "#3f7ba8") + line(left, 21.500, right, 21.500, "#3f7ba8");
out += rect(left, 32, right - left, 18, "#4b4b4b") + rect(left, 33, right - left, 2, "#2f6285");
out += `<path d="M${left + 1} 23v8h4l4-4-4-4z" fill="#1d3850" stroke="#4a90d0"/><path d="M${left + 3} 24.500l4 2.500-4 2.500z" fill="#4a90d0"/><path d="M${right} 22h-3l-5 5 5 5h3z" fill="#666"/>`;
/* Decaying hit inside every event */
const wy = 208.700;
const quiet = [0, 10, 18, 34, 35, 46, 54];
pitches.forEach((p, i) => {
  const x = left + i * step, a = quiet.includes(i) ? 2.500 : 11 + (i * 5 % 4) * 1.500;
  const body = `L${x + 2} ${wy - a * .6}L${x + 4} ${wy - a * .3}L${x + step} ${wy - 1.500}V${wy + 1.500}L${x + 4} ${wy + a * .3}L${x + 2} ${wy + a * .6}L${x} ${wy + a}z`;
  out += `<path d="M${x} ${wy - a}${body}" fill="#7c7c7c"/>`;
});
pitches.forEach((p, i) => {
  const y = zero - p * semi, end = p <= -24 ? bottom : y;
  out += rect(left + i * step, Math.min(end, zero), step, Math.abs(end - zero), "rgba(70,120,165,.32)");
});
for (let i = 0; i < 64; i++) out += line(left + i * step + .5, 22, left + i * step + .5, bottom, i > 28 && i < 49 ? "rgba(35,35,30,.7)" : "#2b2b2b", i > 28 && i < 49 ? 1.500 : 1);
out += line(158.500, 0, 158.500, bottom, "#151515");
pitches.forEach((p, i) => {
  const x = left + i * step + .3, y = zero - p * semi;
  if (p > -24) out += line(x + 2, y, x + 8, y, "#1f4f82", 1.300) + `<circle cx="${x}" cy="${y}" r="2.300" fill="#83aed6" stroke="#1f4f82" stroke-width="1.200"/>`;
});
document.getElementById("chart").innerHTML = out;
```
